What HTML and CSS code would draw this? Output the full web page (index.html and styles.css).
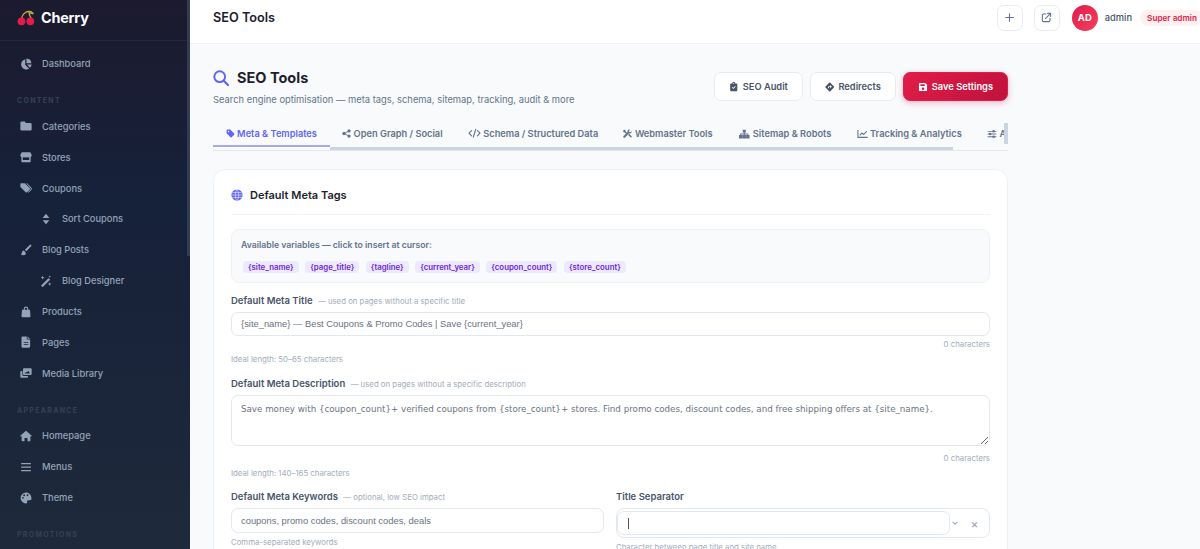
FILE: index.html
```html
<!DOCTYPE html>
<html lang="en">
<head>
    <meta charset="UTF-8">
    <meta name="viewport" content="width=device-width, initial-scale=1.0">
    <title>SEO Tools - Cherry</title>
    <link rel="stylesheet" href="styles.css">
</head>
<body>

<svg class="icon-defs" width="0" height="0" aria-hidden="true">
    <symbol id="i-pie" viewBox="0 0 16 16"><path d="M7 1.500v7.600l5.200 5.200A7 7 0 1 1 7 1.500z"/><path d="M8.600.5a7 7 0 0 1 6.600 6.500H8.600z"/><path d="M9.300 8.600H15.500a7 7 0 0 1-2.200 4.500z"/></symbol>
    <symbol id="i-folder" viewBox="0 0 16 16"><path d="M2 2h4.300l1.700 2h6a1.500 1.500 0 0 1 1.500 1.500v7A1.500 1.500 0 0 1 14 14H2A1.500 1.500 0 0 1 .5 12.500v-9A1.500 1.500 0 0 1 2 2z"/></symbol>
    <symbol id="i-store" viewBox="0 0 16 16"><path d="M2.300 1.500h11.400L15.500 5v1.200a2 2 0 0 1-1.300 1.800V14a1 1 0 0 1-1 1H2.800a1 1 0 0 1-1-1V8A2 2 0 0 1 .5 6.200V5z"/><path fill="#18223a" d="M3.700 8.500h8.600V12H3.700z"/></symbol>
    <symbol id="i-tags" viewBox="0 0 16 16"><path d="M.5 2.500A1 1 0 0 1 1.500 1.500h5l6.500 6.500a1.500 1.500 0 0 1 0 2L9.500 13.500a1.500 1.500 0 0 1-2 0L.5 6.700z"/><path d="M9.500 1.500l5.500 5.700a2.500 2.500 0 0 1 0 3.500l-3.500 3.500-.8-.8 3.300-3.300a1.500 1.500 0 0 0 0-2L8.200 1.500z"/></symbol>
    <symbol id="i-sort" viewBox="0 0 16 16"><path d="M8 1l4.500 5.500h-9zM8 15l-4.500-5.500h9z"/></symbol>
    <symbol id="i-brush" viewBox="0 0 16 16"><path d="M14.800 1.200a1.300 1.300 0 0 0-1.800 0L6.500 7.500l2 2 6.300-6.500a1.300 1.300 0 0 0 0-1.800z"/><path d="M5.300 8.700A3 3 0 0 0 2.500 11.500c0 1-.7 1.700-1.500 2 .8 1 2 1.500 3.300 1.500a3.400 3.400 0 0 0 3.400-3.500z"/></symbol>
    <symbol id="i-wand" viewBox="0 0 16 16"><path d="M10.800 4.500a.8.800 0 0 1 1.100 0l1.100 1.100a.8.800 0 0 1 0 1.100l-9 9a.8.800 0 0 1-1.100 0L1.800 14.600a.8.800 0 0 1 0-1.100z"/><path d="M3.500 1l.7 1.800L6 3.500l-1.800.7L3.500 6l-.7-1.800L1 3.500l1.800-.7zM13 9.500l.7 1.800 1.800.7-1.800.7L13 14.500l-.7-1.800-1.800-.7 1.800-.7zM13 .5l.5 1.300 1.300.5-1.300.5L13 4.100l-.5-1.300-1.300-.5 1.300-.5z"/></symbol>
    <symbol id="i-bag" viewBox="0 0 16 16"><path d="M5 5V3.800a3 3 0 0 1 6 0V5h2.300l.7 8.500a1.500 1.500 0 0 1-1.500 1.500h-9A1.500 1.500 0 0 1 2 13.500L2.700 5zm1.400 0h3.200V3.800a1.600 1.600 0 0 0-3.200 0z" fill-rule="evenodd"/></symbol>
    <symbol id="i-file" viewBox="0 0 16 16"><path d="M3.500.5h5.500v4.200h4.500V14a1.500 1.500 0 0 1-1.500 1.500h-8.500A1.500 1.500 0 0 1 2 14V2A1.500 1.500 0 0 1 3.500.5zM10 .7l3.300 3h-3.300z"/><path fill="#18223a" d="M5 8h6v1H5zM5 10.500h6v1H5z"/></symbol>
    <symbol id="i-media" viewBox="0 0 18 16"><path d="M6 1h10a1.500 1.500 0 0 1 1.500 1.500v7A1.500 1.500 0 0 1 16 11H6a1.500 1.500 0 0 1-1.500-1.500v-7A1.500 1.500 0 0 1 6 1zm1 7.800h8l-2.500-4-2 2.600-1.300-1.100z" fill-rule="evenodd"/><path d="M.5 6.500A1.500 1.500 0 0 1 2 5h1.500v5.500A2 2 0 0 0 5.500 12.500H12v1A1.500 1.500 0 0 1 10.500 15H2A1.500 1.500 0 0 1 .5 13.500z"/></symbol>
    <symbol id="i-house" viewBox="0 0 16 16"><path d="M8 1L.3 7.800l1 1.100.9-.8V14a1 1 0 0 0 1 1h2.800v-4.500h4V15h2.800a1 1 0 0 0 1-1V8.100l.9.800 1-1.100z"/></symbol>
    <symbol id="i-bars" viewBox="0 0 16 16"><path d="M1.500 2.500h13v1.700h-13zM1.500 7.200h13v1.700h-13zM1.500 11.900h13v1.700h-13z"/></symbol>
    <symbol id="i-palette" viewBox="0 0 16 16"><path fill-rule="evenodd" d="M8 .8a7.200 7.200 0 1 0 0 14.400c1.300 0 1.900-1 1.500-2-.4-1 .2-2.200 1.500-2.200h2.300c1.200 0 2-.9 2-2.200C15.300 4 12 .8 8 .8zM4 9a1.200 1.200 0 1 1 0-2.400A1.200 1.200 0 0 1 4 9zm1.500-3.500a1.200 1.200 0 1 1 0-2.400 1.200 1.200 0 0 1 0 2.400zm4.500 0a1.200 1.200 0 1 1 0-2.400 1.200 1.200 0 0 1 0 2.400z"/></symbol>
    <symbol id="i-search" viewBox="0 0 16 16"><circle cx="6.700" cy="6.700" r="5.400" fill="none" stroke="currentColor" stroke-width="2"/><path d="M10.700 10.700l4.300 4.300" stroke="currentColor" stroke-width="2.200" stroke-linecap="round"/></symbol>
    <symbol id="i-clip" viewBox="0 0 16 16"><path fill-rule="evenodd" d="M3.500 2H5.500a2.500 2.500 0 0 1 5 0h2A1.500 1.500 0 0 1 14 3.500v10a1.500 1.500 0 0 1-1.500 1.500h-9A1.500 1.500 0 0 1 2 13.500v-10A1.500 1.500 0 0 1 3.500 2zM8 1.300a.9.900 0 1 0 0 1.800.9.900 0 0 0 0-1.800zM11.300 7.200l-1-1-3 3-1.400-1.400-1 1 2.400 2.400z"/></symbol>
    <symbol id="i-diamond" viewBox="0 0 16 16"><path fill-rule="evenodd" d="M7 .9a1.400 1.400 0 0 1 2 0l6.100 6.100a1.400 1.400 0 0 1 0 2L9 15.100a1.400 1.400 0 0 1-2 0L.9 9a1.400 1.400 0 0 1 0-2zM8.800 4.800v1.800H6.500A1.500 1.500 0 0 0 5 8.100v2h1.500v-2h2.300v1.800l2.700-2.500z"/></symbol>
    <symbol id="i-save" viewBox="0 0 16 16"><path fill-rule="evenodd" d="M2.500 1.500h9L14.500 4.500v8.500a1.500 1.500 0 0 1-1.500 1.500H3A1.500 1.500 0 0 1 1.500 13V2.500a1 1 0 0 1 1-1zM3.800 3.500v3h7v-3zM8 8.700a2 2 0 1 0 0 4 2 2 0 0 0 0-4z"/></symbol>
    <symbol id="i-tag" viewBox="0 0 16 16"><path fill-rule="evenodd" d="M1 2.500A1.500 1.500 0 0 1 2.500 1h5l7 7a1.500 1.500 0 0 1 0 2.100L10.100 14.500a1.500 1.500 0 0 1-2.100 0l-7-7zM4.500 3.200a1.300 1.300 0 1 0 0 2.600 1.300 1.300 0 0 0 0-2.600z"/></symbol>
    <symbol id="i-share" viewBox="0 0 16 16"><circle cx="12.500" cy="3.500" r="2.900"/><circle cx="3.500" cy="8" r="2.900"/><circle cx="12.500" cy="12.500" r="2.900"/><path d="M3.500 8l9-4.500M3.500 8l9 4.500" stroke="currentColor" stroke-width="1.600"/></symbol>
    <symbol id="i-code" viewBox="0 0 20 16"><path d="M5.500 4L1.500 8l4 4M14.500 4l4 4-4 4M11.800 2L8.200 14" fill="none" stroke="currentColor" stroke-width="1.800" stroke-linecap="round" stroke-linejoin="round"/></symbol>
    <symbol id="i-tools" viewBox="0 0 16 16"><path d="M2 1l3 2v1.700l4 4-1.700 1.700-4-4H1.500L0 3.500z"/><path d="M12 .3a3.800 3.800 0 0 0-3.700 4.900L1 12.300a1.900 1.900 0 0 0 2.700 2.700l7.200-7.300A3.800 3.800 0 0 0 15.700 3.600l-2.400 2.300-2-.5-.5-2z"/><path d="M9 10.500l2-2 4.200 4.200a1.400 1.400 0 0 1-2 2z"/></symbol>
    <symbol id="i-sitemap" viewBox="0 0 20 16"><path d="M7.500 1h5v4.500h-1.700v1.700h5.700v2.300h2V15h-5.500V9.500h2V8.700h-4.200v.8h2V15H7.200V9.500h2v-.8H5v.8h2V15H1.500V9.500h2V7.200h5.700V5.500H7.500z"/></symbol>
    <symbol id="i-chart" viewBox="0 0 18 16"><path d="M1.500 1.500v12.200h16" fill="none" stroke="currentColor" stroke-width="1.700"/><path d="M4.500 10.500l3.500-4 3 2.500L16 3.500" fill="none" stroke="currentColor" stroke-width="1.700"/></symbol>
    <symbol id="i-sliders" viewBox="0 0 16 16"><path d="M1 3h14v1.500H1zM1 7.300h14v1.500H1zM1 11.600h14v1.500H1z"/><circle cx="10.500" cy="3.700" r="2"/><circle cx="5" cy="8" r="2"/><circle cx="10.500" cy="12.300" r="2"/></symbol>
    <symbol id="i-plus" viewBox="0 0 16 16"><path d="M8 2.500v11M2.500 8h11" fill="none" stroke="currentColor" stroke-width="1.600" stroke-linecap="round"/></symbol>
    <symbol id="i-external" viewBox="0 0 16 16"><path d="M7 3H3.500A1.500 1.500 0 0 0 2 4.500v8A1.500 1.500 0 0 0 3.500 14h8a1.500 1.500 0 0 0 1.500-1.500V9" fill="none" stroke="currentColor" stroke-width="1.600" stroke-linecap="round"/><path d="M6.500 9.500L13.500 2.500M9.500 2h4.500v4.500" fill="none" stroke="currentColor" stroke-width="1.600" stroke-linecap="round"/></symbol>
    <symbol id="i-globe" viewBox="0 0 16 16"><circle cx="8" cy="8" r="7.500"/><path d="M.5 8h15M1.500 4.800h13M1.500 11.200h13M8 .5c-3 4-3 11 0 15M8 .5c3 4 3 11 0 15" fill="none" stroke="#fff" stroke-width=".7"/></symbol>
    <symbol id="i-chev" viewBox="0 0 10 10"><path d="M2 3.500l3 3 3-3" fill="none" stroke="currentColor" stroke-width="1.400"/></symbol>
</svg>

<div class="layout">
    <aside class="sidebar">
        <div class="brand">
            <svg class="brand-logo" viewBox="0 0 20 18">
                <path d="M5 10C6 6 9 3 13 2M13 2c.5 3 1 6 3 8" fill="none" stroke="#d9a441" stroke-width="1.400"/>
                <path d="M13 2c2-1 4 0 6 3-3 1-5 0-6-3z" fill="#a3b14a"/>
                <circle cx="5" cy="13.300" r="4.300" fill="#e11d48"/>
                <circle cx="14.800" cy="13.300" r="4.300" fill="#e11d48"/>
            </svg>
            <span class="brand-name">Cherry</span>
        </div>
        <nav class="nav">
            <a class="nav-item"><svg class="nav-icon"><use href="#i-pie"/></svg>Dashboard</a>
            <div class="nav-label">CONTENT</div>
            <a class="nav-item"><svg class="nav-icon"><use href="#i-folder"/></svg>Categories</a>
            <a class="nav-item"><svg class="nav-icon"><use href="#i-store"/></svg>Stores</a>
            <a class="nav-item"><svg class="nav-icon"><use href="#i-tags"/></svg>Coupons</a>
            <a class="nav-item sub"><svg class="nav-icon"><use href="#i-sort"/></svg>Sort Coupons</a>
            <a class="nav-item"><svg class="nav-icon"><use href="#i-brush"/></svg>Blog Posts</a>
            <a class="nav-item sub"><svg class="nav-icon"><use href="#i-wand"/></svg>Blog Designer</a>
            <a class="nav-item"><svg class="nav-icon"><use href="#i-bag"/></svg>Products</a>
            <a class="nav-item"><svg class="nav-icon"><use href="#i-file"/></svg>Pages</a>
            <a class="nav-item"><svg class="nav-icon"><use href="#i-media"/></svg>Media Library</a>
            <div class="nav-label">APPEARANCE</div>
            <a class="nav-item"><svg class="nav-icon"><use href="#i-house"/></svg>Homepage</a>
            <a class="nav-item"><svg class="nav-icon"><use href="#i-bars"/></svg>Menus</a>
            <a class="nav-item"><svg class="nav-icon"><use href="#i-palette"/></svg>Theme</a>
            <div class="nav-label">PROMOTIONS</div>
        </nav>
        <div class="sidebar-scroll"></div>
    </aside>

    <div class="main">
        <header class="topbar">
            <h2 class="topbar-title">SEO Tools</h2>
            <div class="topbar-right">
                <button class="icon-btn"><svg><use href="#i-plus"/></svg></button>
                <button class="icon-btn"><svg><use href="#i-external"/></svg></button>
                <div class="avatar">AD</div>
                <span class="user-name">admin</span>
                <span class="role-badge">Super admin</span>
            </div>
        </header>

        <div class="content">
            <div class="page-head">
                <div>
                    <h1 class="page-title"><svg class="page-icon"><use href="#i-search"/></svg>SEO Tools</h1>
                    <p class="page-sub">Search engine optimisation — meta tags, schema, sitemap, tracking, audit &amp; more</p>
                </div>
                <div class="page-actions">
                    <button class="btn"><svg><use href="#i-clip"/></svg>SEO Audit</button>
                    <button class="btn"><svg><use href="#i-diamond"/></svg>Redirects</button>
                    <button class="btn btn-primary"><svg><use href="#i-save"/></svg>Save Settings</button>
                </div>
            </div>

            <div class="tabs-wrap">
                <div class="tabs">
                    <a class="tab active"><svg><use href="#i-tag"/></svg>Meta &amp; Templates</a>
                    <a class="tab"><svg><use href="#i-share"/></svg>Open Graph / Social</a>
                    <a class="tab"><svg class="icon-code"><use href="#i-code"/></svg>Schema / Structured Data</a>
                    <a class="tab"><svg><use href="#i-tools"/></svg>Webmaster Tools</a>
                    <a class="tab"><svg class="icon-sitemap"><use href="#i-sitemap"/></svg>Sitemap &amp; Robots</a>
                    <a class="tab"><svg class="icon-chart"><use href="#i-chart"/></svg>Tracking &amp; Analytics</a>
                    <a class="tab"><svg class="icon-sliders"><use href="#i-sliders"/></svg>Advanced</a>
                </div>
                <div class="tabs-hbar"></div>
                <div class="tabs-vbar"></div>
            </div>

            <section class="card">
                <div class="card-head">
                    <svg class="card-icon"><use href="#i-globe"/></svg>
                    <h3>Default Meta Tags</h3>
                </div>

                <div class="vars">
                    <div class="vars-title">Available variables — click to insert at cursor:</div>
                    <div class="vars-list">
                        <span class="chip">{site_name}</span>
                        <span class="chip">{page_title}</span>
                        <span class="chip">{tagline}</span>
                        <span class="chip">{current_year}</span>
                        <span class="chip">{coupon_count}</span>
                        <span class="chip">{store_count}</span>
                    </div>
                </div>

                <div class="field">
                    <label>Default Meta Title <small>— used on pages without a specific title</small></label>
                    <input class="input" type="text" value="{site_name} — Best Coupons &amp; Promo Codes | Save {current_year}">
                    <div class="counter">0 characters</div>
                    <div class="hint hint-ideal">Ideal length: 50–65 characters</div>
                </div>

                <div class="field field-desc">
                    <label>Default Meta Description <small>— used on pages without a specific description</small></label>
                    <textarea class="input textarea">Save money with {coupon_count}+ verified coupons from {store_count}+ stores. Find promo codes, discount codes, and free shipping offers at {site_name}.</textarea>
                    <div class="counter counter-desc">0 characters</div>
                    <div class="hint hint-ideal">Ideal length: 140–165 characters</div>
                </div>

                <div class="field-row">
                    <div class="field">
                        <label>Default Meta Keywords <small>— optional, low SEO impact</small></label>
                        <input class="input input-keywords" type="text" value="coupons, promo codes, discount codes, deals">
                        <div class="hint">Comma-separated keywords</div>
                    </div>
                    <div class="field">
                        <label>Title Separator</label>
                        <div class="select">
                            <div class="select-value"><span class="caret"></span></div>
                            <svg class="select-arrow"><use href="#i-chev"/></svg>
                            <span class="select-clear">×</span>
                        </div>
                        <div class="hint">Character between page title and site name</div>
                    </div>
                </div>
            </section>
        </div>
    </div>
</div>

</body>
</html>
```

FILE: styles.css
```css
:root {
    --primary-color: #e11d48;
    --accent-color: #6366f1;
    --text-color: #1e1e2e;
    --muted-color: #64748b;
    --line-color: #e8ecf2;
}

* {
    box-sizing: border-box;
}

html, body {
    height: 100%;
}

body {
    font-family: Inter, "Liberation Sans", sans-serif;
    background-color: #f8fafc;
    color: var(--text-color);
    margin: 0;
    overflow: hidden;
}

.icon-defs {
    position: absolute;
}

.layout {
    display: flex;
    height: 549px;
    overflow: hidden;
}

/* Sidebar */
.sidebar {
    width: 190px;
    flex-shrink: 0;
    background: linear-gradient(180deg, #1c1a2e 0%, #16213a 35%, #1e293b 100%);
    position: relative;
    overflow: hidden;
}

.sidebar-scroll {
    position: absolute;
    top: 0;
    right: 0;
    width: 3px;
    height: 256px;
    background: #333d52;
}

.brand {
    height: 41px;
    padding: 0 0 6px 17px;
    display: flex;
    align-items: center;
    gap: 6px;
    border-bottom: 1px solid #1f2a40;
}

.brand-logo {
    width: 18px;
    height: 17px;
}

.brand-name {
    font-size: 14.4px;
    font-weight: 700;
    color: #fff;
    letter-spacing: -0.2px;
}

.nav {
    display: flex;
    flex-direction: column;
    padding-top: 7.4px;
}

.nav-item {
    height: 30.9px;
    flex-shrink: 0;
    display: flex;
    align-items: center;
    gap: 10px;
    padding-left: 20px;
    font-size: 9.3px;
    font-weight: 500;
    color: #94a3b8;
}

.nav-item.sub {
    padding-left: 40px;
}

.nav-icon {
    width: 12px;
    height: 12px;
    fill: #94a3b8;
    flex-shrink: 0;
}

.nav-label {
    font-size: 7px;
    font-weight: 700;
    letter-spacing: 1.3px;
    color: #364156;
    padding-left: 17px;
    height: 15px;
    margin-top: 14px;
    margin-bottom: 2.5px;
    line-height: 15px;
}

/* Top bar */
.main {
    flex: 1;
    min-width: 0;
}

.topbar {
    height: 44px;
    background: #fff;
    border-bottom: 1px solid #eef2f6;
    padding: 0 0 0 23px;
    display: flex;
    align-items: center;
    justify-content: space-between;
    overflow: hidden;
}

.topbar-title {
    margin: 0;
    font-size: 12.7px;
    font-weight: 600;
    position: relative;
    top: -4px;
}

.topbar-right {
    display: flex;
    align-items: center;
    position: relative;
    top: -4px;
    margin-right: -3px;
}

.icon-btn {
    width: 26px;
    height: 26px;
    margin-right: 11px;
    padding: 0;
    background: #fff;
    border: 1px solid var(--line-color);
    border-radius: 7px;
    color: #64748b;
    display: flex;
    align-items: center;
    justify-content: center;
}

.icon-btn svg {
    width: 11px;
    height: 11px;
    fill: none;
}

.avatar {
    width: 26px;
    height: 26px;
    border-radius: 50%;
    background: linear-gradient(135deg, #e11d48, #f43f5e);
    color: #fff;
    font-size: 9.5px;
    font-weight: 700;
    display: flex;
    align-items: center;
    justify-content: center;
    margin-left: 1px;
}

.user-name {
    font-size: 9.3px;
    font-weight: 500;
    color: #475569;
    margin-left: 7px;
}

.role-badge {
    font-size: 8.2px;
    font-weight: 600;
    color: #e11d48;
    background: #fff1f2;
    border-radius: 10px;
    padding: 3px 6px 3px 7px;
    margin-left: 8px;
    white-space: nowrap;
}

/* Page */
.content {
    width: 818px;
    padding: 0 0 0 23px;
}

.page-head {
    display: flex;
    justify-content: space-between;
    align-items: flex-start;
    padding-top: 24px;
    height: 74px;
}

.page-title {
    margin: 0;
    font-size: 14.5px;
    font-weight: 700;
    display: flex;
    align-items: center;
    gap: 8px;
    line-height: 20px;
}

.page-icon {
    width: 16px;
    height: 16px;
    color: var(--accent-color);
    fill: none;
}

.page-sub {
    margin: 6px 0 0;
    font-size: 9.4px;
    color: var(--muted-color);
}

.page-actions {
    display: flex;
    gap: 7px;
    margin-top: 4px;
}

.btn {
    height: 29px;
    padding: 0 14px;
    background: #fff;
    border: 1px solid var(--line-color);
    border-radius: 7px;
    font-family: inherit;
    font-size: 9.3px;
    font-weight: 600;
    color: #475569;
    display: flex;
    align-items: center;
    gap: 4px;
}

.btn svg {
    width: 9.500px;
    height: 10px;
    fill: #475569;
}

.btn-primary {
    background: linear-gradient(135deg, #e11d48, #be123c);
    border-color: #e11d48;
    color: #fff;
    box-shadow: 0 2px 6px rgba(225, 29, 72, 0.3);
    padding: 0 14px;
}

.btn-primary svg {
    width: 10px;
    fill: #fff;
}

/* Tabs */
.tabs-wrap {
    position: relative;
    height: 33px;
    border-bottom: 1px solid #e2e8f0;
    overflow: hidden;
    margin-bottom: 18px;
}

.tabs {
    display: flex;
    overflow: hidden;
    height: 29px;
}

.tab {
    flex-shrink: 0;
    height: 29px;
    padding: 4px 12.6px 0;
    display: flex;
    align-items: center;
    gap: 2.5px;
    font-size: 9.25px;
    font-weight: 600;
    color: #64748b;
    white-space: nowrap;
    border-bottom: 2px solid transparent;
}

.tab svg {
    width: 9px;
    height: 9px;
    fill: currentColor;
}

.tab svg.icon-code {
    width: 13px;
    height: 10.4px;
}

.tab svg.icon-sitemap {
    width: 12.5px;
    height: 10px;
}

.tab svg.icon-chart {
    width: 11px;
    height: 9.8px;
}

.tab svg.icon-sliders {
    width: 10px;
    height: 10px;
}

.tab.active {
    color: var(--accent-color);
    border-bottom-color: #a5a9ee;
}

.tabs-hbar {
    position: absolute;
    left: 117px;
    top: 29px;
    width: 623px;
    height: 3px;
    background: #cbd5e1;
}

.tabs-vbar {
    position: absolute;
    top: 5px;
    right: 0;
    width: 4px;
    height: 21px;
    background: #cbd5e1;
}

/* Card */
.card {
    background: #fff;
    border: 1px solid #eef2f6;
    border-radius: 12px;
    padding: 0 17px;
    height: 400px;
}

.card-head {
    height: 45px;
    display: flex;
    align-items: center;
    gap: 7px;
    border-bottom: 1px solid #f1f5f9;
    margin-bottom: 14px;
    padding-top: 5px;
}

.card-head h3 {
    margin: 0;
    font-size: 11px;
    font-weight: 600;
}

.card-icon {
    width: 12px;
    height: 12px;
    fill: var(--accent-color);
}

.vars {
    background: #f8fafc;
    border: 1px solid #eef2f6;
    border-radius: 8px;
    height: 54px;
    padding: 10px 9px;
    margin-bottom: 12px;
}

.vars-title {
    font-size: 8.7px;
    font-weight: 600;
    color: var(--muted-color);
    line-height: 11px;
    margin-bottom: 10px;
}

.vars-list {
    display: flex;
    gap: 6.5px;
    padding-left: 2px;
}

.chip {
    font-size: 7.85px;
    font-weight: 600;
    color: #6d28d9;
    background: #ede9fe;
    border-radius: 4px;
    padding: 0 5px;
    height: 12px;
    line-height: 12px;
}

.field label {
    display: block;
    font-size: 9.5px;
    font-weight: 600;
    color: #475569;
    line-height: 12px;
    margin-bottom: 5px;
}

.field small {
    font-size: 7.8px;
    font-weight: 400;
    color: #a3acb9;
    margin-left: 3px;
}

.input {
    display: block;
    width: 100%;
    height: 24px;
    border: 1px solid #e2e8f0;
    border-radius: 7px;
    padding: 0 9px;
    background: #fff;
    color: #6b7280;
    font-family: "Liberation Sans", Arial, sans-serif;
    font-size: 9.37px;
    outline: none;
}

.input-keywords {
    height: 25px;
}

.textarea {
    height: 51px;
    padding: 7px 9px;
    font-family: "DejaVu Sans", sans-serif;
    font-size: 8.71px;
    line-height: 12px;
    resize: vertical;
}

.counter {
    font-size: 7.8px;
    color: #a3acb9;
    text-align: right;
    line-height: 10px;
    margin-top: 3px;
}

.counter-desc {
    margin-top: 7px;
}

.hint {
    font-size: 7.8px;
    color: #a3acb9;
    line-height: 10px;
    margin-top: 4px;
}

.hint-ideal {
    margin-top: 5px;
}

.field-desc {
    margin-top: 14px;
}

.field-row {
    display: grid;
    grid-template-columns: 1fr 1fr;
    gap: 12px;
    margin-top: 13px;
}

.select {
    height: 30px;
    border: 1px solid #e2e8f0;
    border-radius: 8px;
    display: flex;
    align-items: center;
    padding: 2px 0;
}

.select-value {
    width: 333px;
    height: 100%;
    border: 1px solid #e2e8f0;
    border-radius: 7px;
    display: flex;
    align-items: center;
    padding-left: 10px;
}

.caret {
    width: 1px;
    height: 11px;
    background: #475569;
}

.select-arrow {
    width: 8px;
    height: 8px;
    margin: 0 1px;
    color: #a3acb9;
    flex-shrink: 0;
}

.select-clear {
    width: 29px;
    font-size: 12px;
    color: #94a3b8;
    text-align: center;
}
```
